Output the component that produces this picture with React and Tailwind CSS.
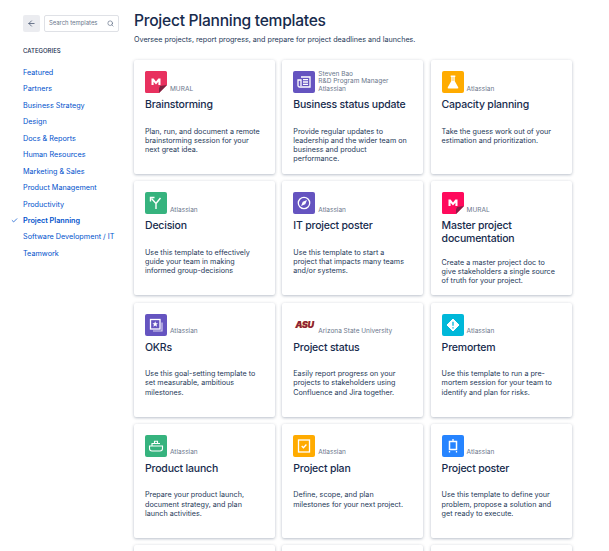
import React from 'react';
import { ArrowLeft, Search, Check } from 'lucide-react';

const CATEGORIES = [
  'Featured', 'Partners', 'Business Strategy', 'Design', 'Docs & Reports', 'Human Resources',
  'Marketing & Sales', 'Product Management', 'Productivity', 'Project Planning',
  'Software Development / IT', 'Teamwork',
];

const MuralIcon = ({ bg, fold }) => (
  <svg viewBox="0 0 22 22" className="w-[22px] h-[22px]">
    <path d="M1.5 0H20.5A1.5 1.5 0 0 1 22 1.5V14L14 22H1.5A1.5 1.5 0 0 1 0 20.5V1.5A1.5 1.5 0 0 1 1.5 0Z" fill={bg} />
    <path d="M22 14L14 22V17.5L15 15Z" fill={fold} />
    <path d="M6.5 14V7.5H8.6L11 10.6L13.4 7.5H15.5V14H13.4V10.8L11 13.6L8.6 10.8V14Z" fill="#fff" />
  </svg>
);

const Tile = ({ bg, children }) => (
  <svg viewBox="0 0 22 22" className="w-[22px] h-[22px]">
    <rect width="22" height="22" rx="2" fill={bg} />
    {children}
  </svg>
);

const ICONS = {
  mural: <MuralIcon bg="#e8315f" fold="#7a2440" />,
  muralPink: <MuralIcon bg="#ff0a5c" fold="#8a1c45" />,
  status: (
    <Tile bg="#6554c0">
      <g fill="none" stroke="#fff" strokeWidth="1.3">
        <path d="M8 6H17V16H6.5A1.5 1.5 0 0 1 5 14.5V9H8V15" />
        <path d="M10 8.7H15M10 11H15M10 13.3H15" />
      </g>
    </Tile>
  ),
  flask: (
    <Tile bg="#ffab00">
      <path d="M8.7 4.5H13.3V6H12.7V10L16.2 16.2A1 1 0 0 1 15.3 17.6H6.7A1 1 0 0 1 5.8 16.2L9.3 10V6H8.7Z" fill="#fff" />
      <rect x="10.4" y="6" width="1.2" height="4" fill="#ffab00" opacity=".6" />
    </Tile>
  ),
  decision: (
    <Tile bg="#36b37e">
      <g fill="none" stroke="#fff" strokeWidth="1.4">
        <path d="M11 17V11.5L6.5 6.5M11 11.5L15.5 6" />
        <path d="M5.5 9.5V5.5H9.5" />
      </g>
    </Tile>
  ),
  compass: (
    <Tile bg="#6554c0">
      <circle cx="11" cy="11" r="5.7" fill="none" stroke="#fff" strokeWidth="1.3" />
      <path d="M14 8L12.2 12.2L8 14L9.8 9.8Z" fill="#fff" />
    </Tile>
  ),
  okr: (
    <Tile bg="#6554c0">
      <path d="M17 8.5V17H8" fill="none" stroke="#fff" strokeOpacity=".75" strokeWidth="1.2" />
      <rect x="5.5" y="5.5" width="9.5" height="9.5" fill="#6554c0" stroke="#fff" strokeWidth="1.3" />
      <path d="M10.2 7.2L11 9.2L13 9.3L11.5 10.6L12 12.7L10.2 11.6L8.4 12.7L8.9 10.6L7.4 9.3L9.4 9.2Z" fill="#fff" />
    </Tile>
  ),
  premortem: (
    <Tile bg="#00b8d9">
      <path d="M11 5L17 11L11 17L5 11Z" fill="#fff" stroke="#fff" strokeLinejoin="round" />
      <path d="M11 7.8V11.8M11 13.2V14.4" stroke="#00b8d9" strokeWidth="1.3" />
    </Tile>
  ),
  launch: (
    <Tile bg="#36b37e">
      <g fill="none" stroke="#fff" strokeWidth="1.1">
        <path d="M4.5 11H17.5V13.5A2.5 2.5 0 0 1 15 16H7A2.5 2.5 0 0 1 4.5 13.5Z" />
        <path d="M7 11V8.5H15M9.5 8.5V6.3H12.5V8.5" />
      </g>
    </Tile>
  ),
  plan: (
    <Tile bg="#ffab00">
      <rect x="5.5" y="5" width="11" height="12" fill="none" stroke="#fff" strokeWidth="1.3" />
      <path d="M8.7 11L10.4 12.7L13.4 9.5" fill="none" stroke="#fff" strokeWidth="1.3" />
    </Tile>
  ),
  poster: (
    <Tile bg="#2684ff">
      <rect x="7.5" y="6.5" width="7" height="8" fill="none" stroke="#fff" strokeWidth="1.5" />
      <path d="M11 4V6.5M7.5 17.5V16M14.5 17.5V16" stroke="#fff" strokeWidth="1.3" />
    </Tile>
  ),
  asu: (
    <div className="w-[22px] h-[22px] self-start">
      <span className="block mt-[6px] ml-[2px] text-[9px] leading-[9px] font-black italic tracking-[-0.4px] text-[#8c1d40] [text-shadow:0.4px_0.4px_0_#ffc627]">ASU</span>
    </div>
  ),
};

const CARDS = [
  { icon: 'mural', source: 'MURAL', title: 'Brainstorming', text: 'Plan, run, and document a remote brainstorming session for your next great idea.' },
  { icon: 'status', source: 'Atlassian', byline: ['Steven Bao', 'R&D Program Manager'], title: 'Business status update', text: 'Provide regular updates to leadership and the wider team on business and product performance.' },
  { icon: 'flask', source: 'Atlassian', title: 'Capacity planning', text: 'Take the guess work out of your estimation and prioritization.' },
  { icon: 'decision', source: 'Atlassian', title: 'Decision', text: 'Use this template to effectively guide your team in making informed group-decisions' },
  { icon: 'compass', source: 'Atlassian', title: 'IT project poster', text: 'Use this template to start a project that impacts many teams and/or systems.' },
  { icon: 'muralPink', source: 'MURAL', title: 'Master project documentation', text: 'Create a master project doc to give stakeholders a single source of truth for your project.' },
  { icon: 'okr', source: 'Atlassian', title: 'OKRs', text: 'Use this goal-setting template to set measurable, ambitious milestones.' },
  { icon: 'asu', source: 'Arizona State University', title: 'Project status', text: 'Easily report progress on your projects to stakeholders using Confluence and Jira together.' },
  { icon: 'premortem', source: 'Atlassian', title: 'Premortem', text: 'Use this template to run a pre-mortem session for your team to identify and plan for risks.' },
  { icon: 'launch', source: 'Atlassian', title: 'Product launch', text: 'Prepare your product launch, document strategy, and plan launch activities.' },
  { icon: 'plan', source: 'Atlassian', title: 'Project plan', text: 'Define, scope, and plan milestones for your next project.' },
  { icon: 'poster', source: 'Atlassian', title: 'Project poster', text: 'Use this template to define your problem, propose a solution and get ready to execute.' },
  {}, {}, {},
];

function Card({ icon, source, byline, title, text }) {
  return (
    <div className="h-[114px] bg-white rounded-[2px] px-[11px] pt-[11px] shadow-[0_1px_3px_rgba(9,30,66,0.25),0_0_4px_rgba(9,30,66,0.05)]">
      {icon && (
        <>
          <div className="flex items-end gap-[3px] h-[22px]">
            {ICONS[icon]}
            <div className="text-[6.5px] leading-[7.3px] text-[#6b778c] whitespace-nowrap">
              {byline && byline.map((line) => <div key={line}>{line}</div>)}
              <div>{source}</div>
            </div>
          </div>
          <h3 className="mt-[6px] text-[10.5px] leading-[12.7px] tracking-[-0.2px] font-medium text-[#172b4d]">{title}</h3>
          <div className={title.length > 24 ? 'mt-[12px]' : 'mt-[15px]'}>
            <p className="max-w-[116px] text-[7.2px] leading-[9.2px] text-[#253858]">{text}</p>
          </div>
        </>
      )}
    </div>
  );
}

export default function App() {
  return (
    <div className="flex h-[551px] w-[609px] overflow-hidden bg-white font-['Inter','Noto_Sans',sans-serif]">
      {/* Sidebar */}
      <div className="w-[134px] flex-shrink-0 pl-[23px] pt-[15px]">
        <div className="flex items-center gap-[4px]">
          <div className="w-[17px] h-[17px] rounded-[2px] bg-[#ebecf0] flex items-center justify-center">
            <ArrowLeft className="w-[9px] h-[9px] text-[#42526e]" />
          </div>
          <div className="w-[75px] h-[17px] flex items-center justify-between px-[4px] border border-[#dfe1e6] rounded-[2px]">
            <span className="text-[5.9px] text-[#6b778c] whitespace-nowrap">Search templates</span>
            <Search className="w-[7px] h-[7px] text-[#505f79]" />
          </div>
        </div>
        <p className="mt-[15px] text-[6px] leading-[8px] font-medium text-[#172b4d]">CATEGORIES</p>
        <ul className="mt-[10px]">
          {CATEGORIES.map((name) => {
            const active = name === 'Project Planning';
            return (
              <li key={name} className={`relative h-[16.45px] leading-[16.45px] text-[7.25px] whitespace-nowrap text-[#0052cc] ${active ? 'font-semibold' : 'font-normal'}`}>
                {active && <Check className="absolute left-[-12px] top-[4px] w-[7px] h-[7px]" strokeWidth={2.5} />}
                {name}
              </li>
            );
          })}
        </ul>
      </div>

      {/* Main */}
      <div className="w-[438px] flex-shrink-0 pt-[10px]">
        <h1 className="text-[15.6px] leading-[21px] tracking-[-0.27px] font-medium text-[#172b4d] whitespace-nowrap">Project Planning templates</h1>
        <p className="mt-[4px] text-[7.2px] leading-[10px] text-[#253858] whitespace-nowrap">
          Oversee projects, report progress, and prepare for project deadlines and launches.
        </p>
        <div className="mt-[15px] grid grid-cols-[141px_141px_141px] gap-x-[7.3px] gap-y-[7.25px]">
          {CARDS.map((card, i) => <Card key={i} {...card} />)}
        </div>
      </div>
    </div>
  );
}
